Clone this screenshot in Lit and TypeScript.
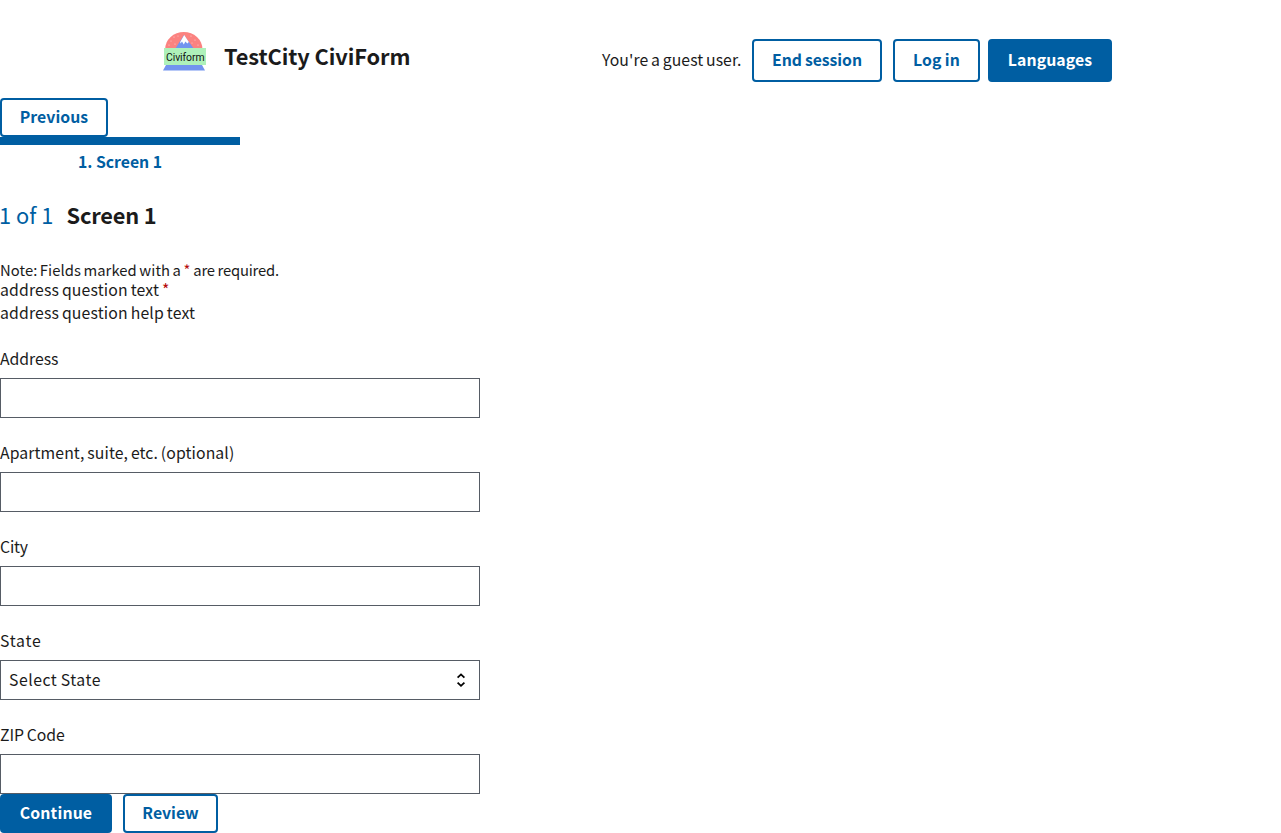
import { LitElement, html, css } from "lit";
import { customElement } from "lit/decorators.js";

@customElement("app-root")
export class AppRoot extends LitElement {
  static styles = css`
    :host {
      display: block;
      height: 833px;
      overflow: hidden;
      background: #fff;
      color: #1b1b1b;
      font-family: "Source Sans Pro", "Noto Sans CJK SC", sans-serif;
      font-size: 15.8px;
      line-height: 23px;
      word-spacing: -0.8px;
      white-space: nowrap;
    }
    * { box-sizing: border-box; }
    header { display: flex; height: 98px; padding-left: 160px; }
    .logo { width: 48px; height: 48px; margin-top: 28px; flex: none; }
    .logo text { font-family: Roboto, sans-serif; font-size: 10.4px; fill: #111; }
    .title { width: 377px; margin: 40px 0 0 16px; font-size: 21.8px; line-height: 32px; font-weight: 700; letter-spacing: -0.1px; word-spacing: 0; }
    .guest { width: 139px; margin: 48px 11px 0 1px; letter-spacing: 0.05px; }
    header button { margin-top: 39px; height: 43px; }
    button {
      display: block;
      flex: none;
      height: 39px;
      padding: 0 0 1px;
      border: 2px solid #005ea2;
      border-radius: 4px;
      background: #fff;
      color: #005ea2;
      font: inherit;
      font-weight: 700;
      line-height: 16px;
      word-spacing: -0.5px;
      text-align: center;
    }
    .solid { background: #005ea2; color: #fff; }
    .end { width: 130px; margin-right: 11px; letter-spacing: -0.05px; }
    .login { width: 87px; margin-right: 8px; letter-spacing: 0.1px; }
    .lang { width: 124px; letter-spacing: 0.1px; }
    .previous { width: 108px; letter-spacing: 0.05px; }
    .step { width: 240px; border-top: 8px solid #005ea2; padding-top: 5px; height: 39px; text-align: center; font-weight: 700; color: #005ea2; letter-spacing: -0.04px; word-spacing: 0; }
    h1 { display: flex; margin: 23px 0 0; height: 32px; font-size: 21.8px; line-height: 32px; letter-spacing: -0.2px; word-spacing: 0; }
    .count { width: 67.5px; margin-left: -1px; font-weight: 400; color: #005ea2; letter-spacing: 0; }
    .note { margin-top: 29px; height: 18px; font-size: 14.8px; line-height: 19px; letter-spacing: 0.05px; word-spacing: -0.8px; }
    .tail { letter-spacing: -0.19px; word-spacing: -0.4px; }
    .question { letter-spacing: 0.15px; }
    .req { color: #b50909; }
    .field { display: block; padding-top: 23px; height: 94px; }
    .field input, .field select {
      display: block;
      width: 480px;
      height: 40px;
      margin-top: 8px;
      border: 1px solid #565c65;
      border-radius: 0;
      padding: 0 8px 2px;
      background: #fff;
      color: #1b1b1b;
      font: inherit;
      letter-spacing: 0.5px;
      word-spacing: -0.5px;
      appearance: none;
    }
    .snug { letter-spacing: -0.04px; }
    .tight { letter-spacing: -0.2px; }
    .loose { letter-spacing: 0.09px; }
    .wide { letter-spacing: 0.75px; }
    .pick { display: grid; width: 480px; }
    .pick > * { grid-area: 1 / 1; }
    .pick svg { width: 20px; height: 20px; justify-self: end; align-self: center; margin: 8px 9px 0 0; pointer-events: none; }
    .actions { display: flex; gap: 11px; }
    .continue { width: 112px; letter-spacing: 0.15px; }
    .review { width: 95px; }
  `;

  private field(label: string, tracking = "snug") {
    return html`<label class="field"><div class=${tracking}>${label}</div><input type="text" /></label>`;
  }

  render() {
    return html`
      <header>
        <svg class="logo" viewBox="0 0 48 48">
          <path d="M5.2 21A18.6 17 0 0 1 42.4 21Z" fill="#fb8280" />
          <path d="M15 21 24 7 34 21Z" fill="#7294ef" />
          <path d="M20.2 14 24.2 7 28.8 14 27.3 15.5 25.4 13.5 23.8 16.5 22 13.5 20.5 15.5Z" fill="#fff" />
          <g fill="#ffd2d0">
            <circle cx="9" cy="17" r=".6" /><circle cx="14" cy="9" r=".6" />
            <circle cx="11" cy="13" r=".5" /><circle cx="15" cy="16" r=".6" />
            <circle cx="18" cy="8" r=".5" /><circle cx="31" cy="8" r=".6" />
            <circle cx="35" cy="12" r=".6" /><circle cx="32" cy="15" r=".5" />
            <circle cx="38" cy="17" r=".6" />
          </g>
          <path d="M6 37H42L45 42.5H3Z" fill="#7294ef" />
          <rect x="4" y="20" width="42" height="17" fill="#aef1ba" />
          <text x="6" y="32.5" textLength="38.5" lengthAdjust="spacing">Civiform</text>
        </svg>
        <div class="title">TestCity CiviForm</div>
        <div class="guest">You're a guest user.</div>
        <button class="end">End session</button>
        <button class="login">Log in</button>
        <button class="solid lang">Languages</button>
      </header>
      <button class="previous">Previous</button>
      <div class="step">1. Screen 1</div>
      <h1><span class="count">1 of 1</span><span>Screen 1</span></h1>
      <div class="note">Note: Fields marked with a <span class="req">*</span><span class="tail"> are required.</span></div>
      <div class="question">address question text <span class="req">*</span></div>
      <div class="question">address question help text</div>
      ${this.field("Address")}
      ${this.field("Apartment, suite, etc. (optional)", "loose")}
      ${this.field("City", "tight")}
      <label class="field">
        <div class="wide">State</div>
        <div class="pick">
          <select><option>Select State</option></select>
          <svg viewBox="0 0 20 20" fill="none" stroke="#000" stroke-width="1.8">
            <path d="M6.6 7.6 10 4.4 13.4 7.6M6.6 12.6 10 15.8 13.4 12.6" />
          </svg>
        </div>
      </label>
      ${this.field("ZIP Code")}
      <div class="actions">
        <button class="solid continue">Continue</button>
        <button class="review">Review</button>
      </div>
    `;
  }
}
